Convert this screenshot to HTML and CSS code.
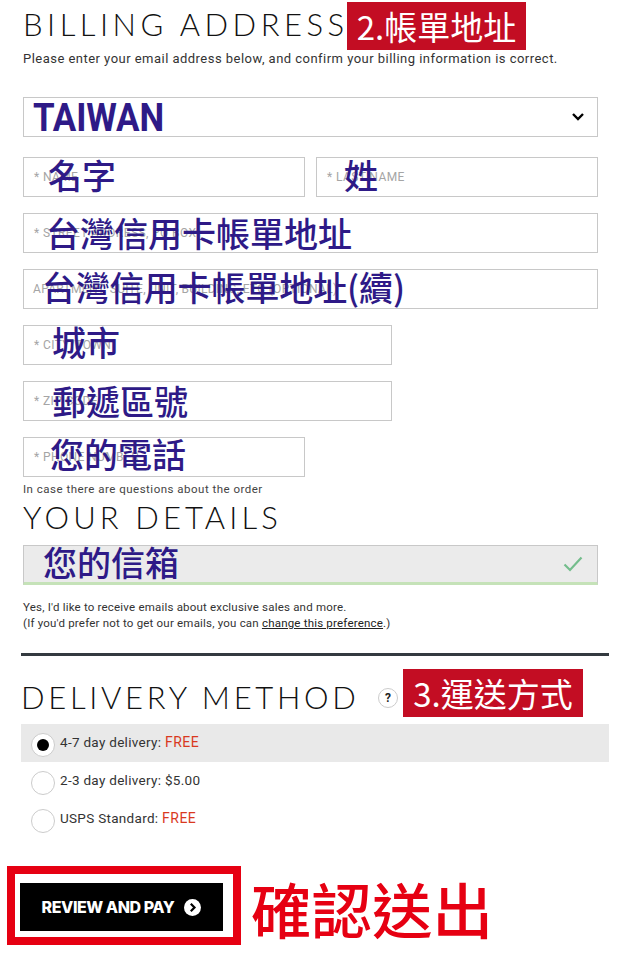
FILE: index.html
```html
<!DOCTYPE html>
<html lang="en">
<head>
<meta charset="utf-8">
<title>Billing address</title>
<link rel="stylesheet" href="styles.css">
</head>
<body>
<main class="page">
  <div class="head-row billing-head">
    <h2 class="title title-billing">BILLING ADDRESS</h2>
    <span class="tag tag-billing">2.帳單地址</span>
  </div>
  <p class="intro">Please enter your email address below, and confirm your billing information is correct.</p>

  <form class="form">
    <div class="field select-field">
      <span class="country">TAIWAN</span>
      <svg class="chevron" width="14" height="10" viewBox="0 0 14 10"><path d="M2 2l5 5 5-5" fill="none" stroke="#000" stroke-width="2.4"/></svg>
    </div>
    <div class="two-col first-row">
      <div class="field"><span class="ph">* NAME</span><span class="note note-name">名字</span></div>
      <div class="field"><span class="ph">* LAST NAME</span><span class="note note-last">姓</span></div>
    </div>
    <div class="field row"><span class="ph">* STREET ADDRESS, PO BOX</span><span class="note note-street">台灣信用卡帳單地址</span></div>
    <div class="field row"><span class="ph ph-flush">APARTMENT, SUITE, UNIT, BUILDING, ETC (OPTIONAL)</span><span class="note note-apt">台灣信用卡帳單地址(續)</span></div>
    <div class="field row wide"><span class="ph">* CITY/TOWN</span><span class="note note-city">城市</span></div>
    <div class="field row wide"><span class="ph">* ZIP CODE</span><span class="note note-zip">郵遞區號</span></div>
    <div class="field row half"><span class="ph">* PHONE NUMBER</span><span class="note note-phone">您的電話</span></div>
    <p class="hint">In case there are questions about the order</p>

    <h2 class="title title-details">YOUR DETAILS</h2>
    <div class="field email-field">
      <span class="note note-email">您的信箱</span>
      <svg class="check" width="20" height="16" viewBox="0 0 20 16"><path d="M1.5 8.5l5.5 5.5L18.5 1.5" fill="none" stroke="#74bd8c" stroke-width="2.2"/></svg>
    </div>
    <p class="consent">Yes, I'd like to receive emails about exclusive sales and more.<br>(If you'd prefer not to get our emails, you can <a class="link" href="#">change this preference</a>.)</p>
  </form>

  <hr class="rule">

  <div class="head-row delivery-head">
    <h2 class="title title-delivery">DELIVERY METHOD</h2>
    <span class="help">?</span>
    <span class="tag tag-delivery">3.運送方式</span>
  </div>
  <ul class="options">
    <li class="option selected"><span class="radio"><span class="dot"></span></span><span class="label">4-7 day delivery: <b class="free">FREE</b></span></li>
    <li class="option"><span class="radio"></span><span class="label">2-3 day delivery: $5.00</span></li>
    <li class="option"><span class="radio"></span><span class="label">USPS Standard: <b class="free">FREE</b></span></li>
  </ul>

  <div class="submit-row">
    <div class="frame">
      <button class="pay" type="button">REVIEW AND PAY
        <svg class="pay-icon" width="17" height="17" viewBox="0 0 17 17"><circle cx="8.5" cy="8.5" r="8.5" fill="#fff"/><path d="M6.8 4.8l3.7 3.7-3.7 3.7" fill="none" stroke="#000" stroke-width="2.2"/></svg>
      </button>
    </div>
    <span class="confirm">確認送出</span>
  </div>
</main>
</body>
</html>
```
FILE: styles.css
```css
* { box-sizing: border-box; }
html, body { margin: 0; padding: 0; background: #fff; }
body { font-family: "Roboto", "Noto Sans CJK TC", sans-serif; color: #222; width: 618px; height: 960px; overflow: hidden; }
.page { padding: 2px 9px 0 7px; }

.head-row { display: flex; align-items: flex-start; }
.billing-head { height: 48px; padding-left: 16px; }
.title { margin: 0; font-family: "Lato", "Liberation Sans", sans-serif; font-weight: 300; font-size: 31px; line-height: 36px; color: #111; white-space: nowrap; }
.title-billing { letter-spacing: 4.5px; width: 324px; margin-top: 4px; }
.tag { background: #c30d23; color: #fff; font-family: "Noto Sans CJK TC", sans-serif; font-size: 33px; line-height: 48px; height: 48px; text-align: center; white-space: nowrap; }
.tag-billing { width: 179px; }
.intro { margin: 1px 0 0 16px; font-size: 13px; line-height: 16px; letter-spacing: 0.47px; color: #333; white-space: nowrap; }

.form { margin: 30px 0 0 16px; width: 575px; }
.field { position: relative; height: 40px; border: 1px solid #c8c8c8; background: #fff; display: flex; align-items: center; padding-left: 10px; }
.select-field { justify-content: space-between; padding: 0 12px 0 9px; }
.country { margin-top: 2px; font-family: "Roboto", sans-serif; font-weight: 700; font-size: 38px; line-height: 38px; color: #2e1a87; letter-spacing: -0.1px; transform: scaleX(0.92); transform-origin: left; }
.two-col { display: flex; gap: 11px; margin-top: 20px; }
.two-col .field { width: 282px; }
.row { margin-top: 16px; }
.wide { width: 369px; }
.half { width: 282px; }
.ph { font-size: 12px; letter-spacing: 0.4px; color: #a5a5a5; white-space: nowrap; }
.ph-flush { margin-left: -1px; letter-spacing: 0.3px; }
.note { position: absolute; font-family: "Noto Sans CJK TC", sans-serif; font-weight: 500; font-size: 34px; line-height: 40px; color: #2e1a87; white-space: nowrap; top: -2px; }
.note-name { left: 24px; top: -3px; }
.note-last { left: 27px; top: -3px; }
.note-street { left: 22px; top: -1px; }
.note-apt { left: 18px; top: -3px; letter-spacing: -0.1px; }
.note-city { left: 28px; top: -4px; }
.note-zip { left: 28px; top: -1px; }
.note-phone { left: 26px; top: -4px; }
.note-email { left: 19px; top: -4px; }
.hint { margin: 5px 0 0; font-size: 11.5px; line-height: 14px; letter-spacing: 0.49px; color: #444; white-space: nowrap; }
.title-details { letter-spacing: 4.1px; margin-top: 3px; height: 44px; line-height: 36px; }
.email-field { margin-top: 2px; background: #ebebeb; border-bottom: 3px solid #c5e2b8; justify-content: flex-end; padding-right: 14px; }
.consent { margin: 14px 0 0; font-size: 11.5px; line-height: 16px; letter-spacing: 0.2px; color: #333; white-space: nowrap; }
.link { color: #222; text-decoration: underline; }

.rule { margin: 22px 0 0 14px; width: 588px; height: 3px; border: 0; background: #343a40; }
.delivery-head { height: 48px; margin-top: 13px; padding-left: 14px; align-items: center; }
.title-delivery { letter-spacing: 3.7px; width: 362px; margin-top: 8px; }
.help { width: 20px; height: 20px; border-radius: 50%; border: 1px solid #ccc; font-size: 12px; font-weight: 700; line-height: 18px; text-align: center; color: #222; margin: 10px 5px 0 -5px; }
.tag-delivery { width: 180px; }

.options { list-style: none; margin: 7px 0 0 14px; padding: 0; width: 588px; }
.option { height: 38px; display: flex; align-items: flex-start; padding-left: 10px; }
.selected { background: #e9e9e9; }
.radio { width: 24px; height: 24px; margin-top: 9px; border-radius: 50%; border: 1px solid #ccc; background: #fff; display: flex; align-items: center; justify-content: center; flex: none; }
.dot { width: 12px; height: 12px; border-radius: 50%; background: #000; }
.label { margin: 10px 0 0 5px; font-size: 13.5px; line-height: 16px; letter-spacing: 0.3px; color: #333; white-space: nowrap; }
.free { font-weight: 400; font-size: 14px; letter-spacing: 0.5px; color: #d9391f; }

.submit-row { display: flex; align-items: flex-start; margin-top: 28px; }
.frame { width: 234px; height: 79px; border: 8px solid #e60012; padding: 9px 0 0 5px; flex: none; }
.pay { display: flex; align-items: center; justify-content: center; gap: 10px; width: 203px; height: 48px; padding: 0; border: 0; background: #000; color: #fff; font-family: "Inter", sans-serif; font-weight: 800; font-size: 16px; letter-spacing: -0.45px; }
.pay-icon { flex: none; }
.confirm { margin: 7px 0 0 10px; font-family: "Noto Sans CJK TC", sans-serif; font-weight: 500; font-size: 60.5px; line-height: 70px; color: #e60012; white-space: nowrap; }
```
